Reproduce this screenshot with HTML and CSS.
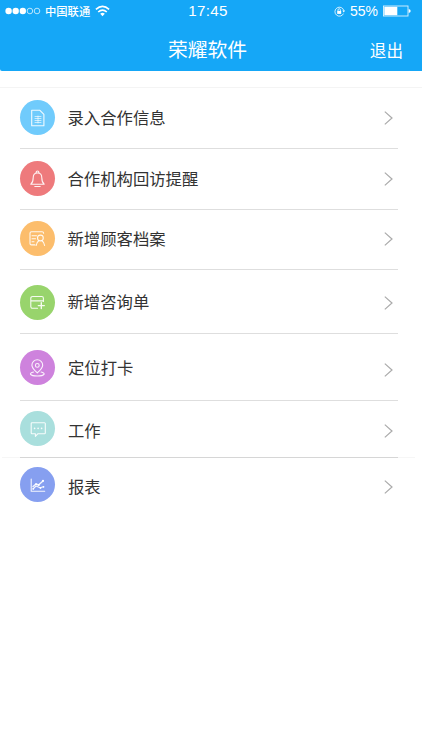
FILE: index.html
```html
<!DOCTYPE html>
<html lang="zh-CN">
<head>
<meta charset="utf-8">
<title>荣耀软件</title>
<link rel="stylesheet" href="styles.css">
</head>
<body>
<header class="header">
  <div class="status">
    <div class="carrier">
      <svg class="signal" width="36" height="8" viewBox="0 0 36 8"><g fill="#fff"><circle cx="3.6" cy="4" r="3.2"/><circle cx="10.7" cy="4" r="3.2"/><circle cx="17.8" cy="4" r="3.2"/></g><g fill="none" stroke="#fff" stroke-width=".7"><circle cx="24.9" cy="4" r="2.8"/><circle cx="32" cy="4" r="2.8"/></g></svg>
      <span class="operator">中国联通</span>
      <svg class="wifi" width="15" height="12" viewBox="0 0 15 12"><g fill="none" stroke="#fff" stroke-width="1.6"><path d="M.9 4.4Q7.5-1.7 14.1 4.4"/><path d="M3.2 7Q7.5 3.1 11.8 7"/></g><path d="M5.2 8.8Q7.5 6.9 9.8 8.8L7.5 11.2Z" fill="#fff"/></svg>
    </div>
    <div class="time">17:45</div>
    <div class="power">
      <svg width="11" height="11" viewBox="0 0 11 11"><path d="M9.5 7.6A4.5 4.5 0 1 1 9.8 4.6" fill="none" stroke="#fff" stroke-width=".8"/><path d="M8.3 4.5h2.7L9.8 6.5Z" fill="#fff"/><rect x="3.2" y="4.9" width="4" height="3" fill="#fff"/><path d="M4 5V3.9a1.2 1.2 0 0 1 2.4 0V5" fill="none" stroke="#fff" stroke-width=".8"/></svg>
      <span class="percent">55%</span>
      <svg width="28" height="12" viewBox="0 0 28 12"><rect x=".5" y="1" width="24.5" height="10" fill="none" stroke="#fff" stroke-opacity=".85" stroke-width=".9"/><rect x="1.3" y="1.8" width="13" height="8.4" fill="#fff"/><path d="M25.7 4q2 .3 2 2t-2 2Z" fill="#fff"/></svg>
    </div>
  </div>
  <div class="titlebar">
    <h1 class="title">荣耀软件</h1>
    <span class="logout">退出</span>
  </div>
</header>
<main class="menu">
  <div class="row entry">
    <span class="badge"><svg class="glyph" viewBox="0 0 35 35"><path d="M11.7 10.3h8.2l4 4v11.4H11.7Z"/><path class="thin" d="M15 16.500h6M15 18.500h6M15 20.500h6M15 22.500h6M18 16v7"/></svg></span>
    <span class="label">录入合作信息</span>
    <svg class="chevron" viewBox="0 0 9 14"><path d="M.8.6 8 7 .8 13.4"/></svg>
  </div>
  <div class="row visit">
    <span class="badge"><svg class="glyph" viewBox="0 0 35 35"><path d="M10.800 23.200c2-1.600 2.400-3.200 2.400-6.500 0-3 1.500-4.700 4.300-4.700s4.300 1.700 4.300 4.700c0 3.300.4 4.900 2.400 6.500ZM16.100 12v-.6a1.400 1.400 0 0 1 2.800 0V12M14.800 25.500h5.400"/></svg></span>
    <span class="label">合作机构回访提醒</span>
    <svg class="chevron" viewBox="0 0 9 14"><path d="M.8.6 8 7 .8 13.4"/></svg>
  </div>
  <div class="row customer">
    <span class="badge"><svg class="glyph" viewBox="0 0 35 35"><path d="M23.600 12.200a1.500 1.500 0 0 0-1.500-1.500H11.500A1.500 1.500 0 0 0 10 12.200v10.200a1.500 1.500 0 0 0 1.500 1.500h3.500M12 14.700h4.500M12 17.700h3.500M12 20.700h2"/><circle cx="20.400" cy="17" r="2.900"/><path d="M16.200 24.500c.3-2.400 1-3.800 2.600-4.800M22 19.700c1.600 1 2.300 2.400 2.600 4.800"/></svg></span>
    <span class="label">新增顾客档案</span>
    <svg class="chevron" viewBox="0 0 9 14"><path d="M.8.6 8 7 .8 13.4"/></svg>
  </div>
  <div class="row consult">
    <span class="badge"><svg class="glyph" viewBox="0 0 35 35"><path d="M17.500 23.300h-5a1.700 1.700 0 0 1-1.700-1.700v-8.400a1.700 1.700 0 0 1 1.700-1.700h9.200a1.700 1.700 0 0 1 1.700 1.700v3.300M10.800 15.900h12.600"/><path class="strong" d="M18.300 20.600h6M21.300 17.600V23.600"/></svg></span>
    <span class="label">新增咨询单</span>
    <svg class="chevron" viewBox="0 0 9 14"><path d="M.8.6 8 7 .8 13.4"/></svg>
  </div>
  <div class="row checkin">
    <span class="badge"><svg class="glyph" viewBox="0 0 35 35"><path d="M17.300 22.900c-3.200-3-5.400-5-5.400-7.700a5.400 5.400 0 0 1 10.800 0c0 2.700-2.200 4.700-5.400 7.700Z"/><circle cx="17.300" cy="15.400" r="1.900"/><path d="M13.500 22c-5 1-4 4 3.800 4s8.800-3 3.800-4"/></svg></span>
    <span class="label">定位打卡</span>
    <svg class="chevron" viewBox="0 0 9 14"><path d="M.8.6 8 7 .8 13.4"/></svg>
  </div>
  <div class="row work">
    <span class="badge"><svg class="glyph" viewBox="0 0 35 35"><path d="M12 11.800h12.500a.8.8 0 0 1 .8.8v9.300a.8.8 0 0 1-.8.8H18l-2.600 2.600v-2.600H12a.8.8 0 0 1-.8-.8v-9.300a.8.8 0 0 1 .8-.8Z"/><path class="dots" d="M14.600 17.300h.01M18.100 17.300h.01M21.600 17.300h.01"/></svg></span>
    <span class="label">工作</span>
    <svg class="chevron" viewBox="0 0 9 14"><path d="M.8.6 8 7 .8 13.4"/></svg>
  </div>
  <div class="row report">
    <span class="badge"><svg class="glyph" viewBox="0 0 35 35"><path d="M11.200 12v12.200h13.500M13 22l3-3 4 1.800 3.500-1"/><path class="strong" d="m13 19.500 3-2.500 2.500 1 4.500-4"/><g fill="#fff" stroke="none"><circle cx="16" cy="17.200" r="1"/><circle cx="18.800" cy="18" r="1"/><circle cx="23" cy="13.800" r="1.100"/><circle cx="20.500" cy="21" r=".9"/><circle cx="13.300" cy="21.800" r=".9"/><circle cx="23.500" cy="19.800" r=".9"/></g></svg></span>
    <span class="label">报表</span>
    <svg class="chevron" viewBox="0 0 9 14"><path d="M.8.6 8 7 .8 13.4"/></svg>
  </div>
</main>
</body>
</html>
```
FILE: styles.css
```css
* { box-sizing: border-box; }
body {
  margin: 0;
  min-height: 750px;
  background: #fff;
  font-family: "Noto Sans CJK SC", sans-serif;
  color: #333;
}
svg { display: block; flex: none; }
.header {
  height: 71px;
  background: #15a7f7;
  color: #fff;
  border-bottom-left-radius: 2px;
}
.status {
  display: grid;
  grid-template-columns: 1fr auto 1fr;
  align-items: center;
  height: 22px;
  padding: 0 11px 0 5px;
}
.carrier, .power { display: flex; align-items: center; }
.power { justify-content: flex-end; }
.operator {
  margin: 0 5px 0 4px;
  font-size: 11.3px;
  line-height: 20px;
  font-weight: 500;
}
.time {
  font: 15.2px/22px "Liberation Sans", sans-serif;
  letter-spacing: .25px;
}
.percent {
  margin: 0 5px 0 5px;
  font: 14px/22px "Liberation Sans", sans-serif;
}
.titlebar {
  display: grid;
  grid-template-columns: 1fr auto 1fr;
  height: 49px;
  padding: 0 19px 0 12px;
}
.title {
  grid-column: 2;
  margin: 0;
  font-size: 19.8px;
  font-weight: 400;
  line-height: 53px;
}
.logout {
  justify-self: end;
  font-size: 16.6px;
  line-height: 57px;
}
.menu { margin-top: 16px; border-top: 1px solid #f4f4f4; }
.row {
  position: relative;
  display: grid;
  grid-template-columns: 35px 1fr 9px;
  column-gap: 12.5px;
  align-items: start;
  margin: 0 24px 0 20px;
  padding-right: 5px;
  border-bottom: 1px solid #dedede;
}
.badge {
  width: 35px;
  height: 35px;
  border-radius: 50%;
}
.label { font-size: 16.35px; line-height: 35px; white-space: nowrap; }
.chevron { width: 9px; height: 14px; margin-top: 11px; fill: none; stroke: #aaa; stroke-width: 1.2; }
.glyph { width: 35px; height: 35px; fill: none; stroke: #fff; stroke-opacity: .9; stroke-width: 1.1; stroke-linecap: round; stroke-linejoin: round; }
.thin { stroke-width: .7; }
.strong { stroke-width: 1.4; }
.dots { stroke-width: 1.7; }

.entry { height: 61px; padding-top: 12px; }
.entry .badge { background: #70cbfc; }
.visit { height: 61px; padding-top: 12px; }
.visit .badge { background: #ee7a7c; }
.customer { height: 60px; padding-top: 11px; }
.customer .badge { background: #fcbd6c; }
.consult { height: 64px; padding-top: 14.5px; }
.consult .badge { background: #98d46c; }
.consult .label { line-height: 33px; }
.checkin { height: 67px; padding-top: 16px; }
.checkin .badge { background: #ce82dd; }
.checkin .label { padding-left: .5px; }
.checkin .chevron { margin-top: 13px; }
.work { height: 57px; padding-top: 10px; }
.work .badge { background: #a9dfdd; }
.work .label { padding-left: .5px; line-height: 39px; }
.work .chevron { margin-top: 13px; }
/* hairline that runs past both ends of the divider */
.work::after {
  content: "";
  position: absolute;
  left: -18px;
  right: -17px;
  bottom: -1px;
  height: 1px;
  background: rgba(0, 0, 0, .035);
}
.report { height: 60px; padding-top: 9px; border-bottom: 0; }
.report .badge { background: #869ff0; }
.report .label { padding-left: .5px; line-height: 39px; }
.report .chevron { margin-top: 13px; }
```
